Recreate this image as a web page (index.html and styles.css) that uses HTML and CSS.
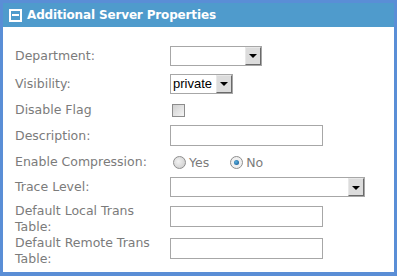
FILE: index.html
```html
<!DOCTYPE html>
<html lang="en">
<head>
    <meta charset="UTF-8">
    <title>Additional Server Properties</title>
    <link rel="stylesheet" href="styles.css">
</head>
<body>
    <div class="panel">
        <div class="panel-header">
            <span class="toggle"><span class="toggle-bar"></span></span>
            <span class="panel-title">Additional Server Properties</span>
        </div>
        <div class="panel-body">
            <div class="form-grid">
                <label>Department:</label>
                <div class="select dept"><span class="select-value"></span><span class="select-btn"><span class="caret"></span></span></div>

                <label>Visibility:</label>
                <div class="select vis"><span class="select-value">private</span><span class="select-btn"><span class="caret"></span></span></div>

                <label>Disable Flag</label>
                <div><span class="checkbox"></span></div>

                <label>Description:</label>
                <div class="textbox"></div>

                <label>Enable Compression:</label>
                <div class="radios">
                    <span class="radio"></span><span class="radio-label yes">Yes</span>
                    <span class="radio checked"><span class="dot"></span></span><span class="radio-label">No</span>
                </div>

                <label class="top trace-label">Trace Level:</label>
                <div class="select trace top"><span class="select-value"></span><span class="select-btn"><span class="caret"></span></span></div>

                <label class="top">Default Local Trans Table:</label>
                <div class="textbox top shift"></div>

                <label class="top">Default Remote Trans Table:</label>
                <div class="textbox top shift"></div>
            </div>
        </div>
    </div>
</body>
</html>
```

FILE: styles.css
```css
body {
    margin: 0;
    padding: 0;
    background: #fff;
    font-family: "DejaVu Sans", Verdana, sans-serif;
}
.panel {
    width: 391px;
    height: 269px;
    border: 3px solid #5a8ed6;
    border-bottom-width: 4px;
    background: #fff;
}
.panel-header {
    height: 24px;
    background: #4f9bcc;
    display: flex;
    align-items: center;
    padding-left: 6px;
}
.toggle {
    width: 9px;
    height: 9px;
    border: 2px solid #fff;
    display: flex;
    align-items: center;
    justify-content: center;
    margin-right: 5px;
}
.toggle-bar {
    width: 7px;
    height: 2px;
    background: #fff;
}
.panel-title {
    color: #fff;
    font-weight: bold;
    font-size: 12px;
    letter-spacing: -0.15px;
}
.panel-body {
    padding: 15px 0 0 12px;
}
.form-grid {
    display: grid;
    grid-template-columns: 155px auto;
    grid-template-rows: 27px 29px 24px 27px 26px 28px 32px 32px;
    align-items: center;
    justify-items: start;
}
label {
    max-width: 145px;
    font-size: 12.5px;
    line-height: 16px;
    color: #7b7b7b;
}
.top {
    align-self: start;
}
.trace-label {
    margin-top: 4px;
}
.select.trace {
    margin-top: 2px;
}
.shift {
    margin-top: 3px;
}
.select {
    height: 18px;
    border: 1px solid #a7a7a7;
    display: flex;
    background: #fff;
}
.dept { width: 90px; }
.vis { width: 61px; }
.trace { width: 193px; }
.select-value {
    flex: 1;
    font-family: "Liberation Sans", Arial, sans-serif;
    font-size: 13px;
    line-height: 18px;
    color: #000;
    padding-left: 2px;
}
.select-btn {
    width: 14px;
    height: 16px;
    margin: 0 0 0 1px;
    border: 1px solid;
    border-color: #e8e8e8 #6a6a6a #6a6a6a #e8e8e8;
    background: #dcdcdc;
    display: flex;
    align-items: center;
    justify-content: center;
}
.caret {
    width: 0;
    height: 0;
    border-left: 4px solid transparent;
    border-right: 4px solid transparent;
    border-top: 4px solid #000;
    margin-top: 1px;
}
.checkbox {
    display: block;
    width: 11px;
    height: 11px;
    margin-left: 2px;
    border: 1px solid #8c8c8c;
    background: linear-gradient(135deg, #d0d0d0, #f4f4f4);
}
.textbox {
    width: 151px;
    height: 19px;
    border: 1px solid #a7a7a7;
    background: #fff;
}
.radios {
    display: flex;
    align-items: center;
    font-size: 12.5px;
    color: #7b7b7b;
}
.radio {
    width: 11px;
    height: 11px;
    border: 1px solid #8e8e8e;
    border-radius: 50%;
    background: radial-gradient(circle at 40% 40%, #f2f2f2, #c8c8c8);
    margin-left: 3px;
    margin-right: 3px;
    display: flex;
    align-items: center;
    justify-content: center;
}
.radio.checked {
    background: #f0f0f0;
}
.dot {
    width: 5px;
    height: 5px;
    border-radius: 50%;
    background: radial-gradient(circle at 40% 40%, #5ab0e0, #0a4f8a);
}
.yes {
    margin-right: 18px;
}
```
